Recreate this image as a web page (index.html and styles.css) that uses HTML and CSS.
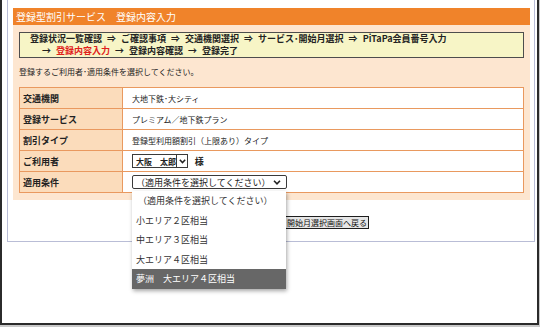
FILE: index.html
```html
<!DOCTYPE html>
<html>
  <head>
    <title>登録内容入力</title>
    <meta charset="UTF-8" />
    <meta name="viewport" content="width=device-width, initial-scale=1.0" />
    <link rel="stylesheet" href="styles.css">
  </head>
  <body>
    <div class="frame">
      <div class="panel">
        <h1 class="title">登録型割引サービス　登録内容入力</h1>

        <div class="body">
          <div class="steps">
            <div>登録状況一覧確認<span class="arr">⇒</span>ご確認事項<span class="arr">⇒</span>交通機関選択<span class="arr">⇒</span>サービス･開始月選択<span class="arr">⇒</span>PiTaPa会員番号入力</div>
            <div class="steps-2"><span class="arr first">→</span><span class="current">登録内容入力</span><span class="arr">→</span>登録内容確認<span class="arr">→</span>登録完了</div>
          </div>

          <p class="lead">登録するご利用者･適用条件を選択してください。</p>

          <table class="info">
            <tr>
              <th>交通機関</th>
              <td>大地下鉄･大シティ</td>
            </tr>
            <tr>
              <th>登録サービス</th>
              <td>プレミアム／地下鉄プラン</td>
            </tr>
            <tr>
              <th>割引タイプ</th>
              <td>登録型利用額割引（上限あり）タイプ</td>
            </tr>
            <tr>
              <th>ご利用者</th>
              <td>
                <span class="pick pick-name">
                  <span class="pick-text">大阪　太郎</span>
                  <span class="pick-btn">
                    <svg width="7" height="5" viewBox="0 0 7 5"><path d="M0.8 0.8 L3.5 3.6 L6.2 0.8" fill="none" stroke="#222" stroke-width="1.5"/></svg>
                  </span>
                </span>
                <span class="sama">様</span>
              </td>
            </tr>
            <tr>
              <th>適用条件</th>
              <td>
                <div class="combo">
                  <span class="pick pick-cond">
                    <span class="pick-text">（適用条件を選択してください）</span>
                    <svg width="8" height="5" viewBox="0 0 8 5"><path d="M1 0.8 L4 3.8 L7 0.8" fill="none" stroke="#222" stroke-width="1.6"/></svg>
                  </span>
                  <ul class="menu">
                    <li>（適用条件を選択してください）</li>
                    <li>小エリア２区相当</li>
                    <li>中エリア３区相当</li>
                    <li>大エリア４区相当</li>
                    <li class="active">夢洲　大エリア４区相当</li>
                  </ul>
                </div>
              </td>
            </tr>
          </table>
        </div>

        <div class="actions">
          <button type="button">サービス･開始月選択画面へ戻る</button>
        </div>
      </div>
    </div>
  </body>
</html>
```

FILE: styles.css
```css
body {
  margin: 0;
  background: #c9c9c9;
  font-family: "Noto Sans CJK JP", sans-serif;
}
.frame {
  box-sizing: border-box;
  width: 539px;
  height: 325px;
  background: #fff;
  border: 2px solid #2b2b2b;
  border-top: none;
}
.panel {
  box-sizing: border-box;
  width: 528px;
  margin-left: 5px;
  padding: 8px 4px 10px 5px;
  border: 1px solid #b9bdd6;
  border-top: none;
}
.title {
  margin: 0;
  height: 17px;
  padding-left: 3px;
  background: #f0832a;
  color: #fff;
  font-size: 10px;
  font-weight: normal;
  line-height: 17px;
}
.body {
  background: #fde6d0;
  padding: 7px 6px 7px;
}
.steps {
  border: 1px solid #4d4d4d;
  background: #f7f5c6;
  padding-left: 10px;
  font-size: 9px;
  font-weight: bold;
  line-height: 12px;
  color: #222;
}
.arr {
  margin: 0 5px;
}
.steps-2 .first {
  margin-left: 0;
}
.steps-2 {
  padding-left: 12px;
}
.current {
  color: #e0201b;
}
.lead {
  margin: 8px 0 9px;
  font-size: 8px;
  line-height: 12px;
  color: #222;
}
.info {
  width: 100%;
  border-collapse: collapse;
  border: 1px solid #e38a4c;
}
.info th,
.info td {
  height: 20px;
  padding: 0;
  border: 1px solid #e9995f;
  color: #222;
  text-align: left;
}
.info th {
  width: 99px;
  padding-left: 3px;
  background: #fbdcbb;
  font-size: 9px;
}
.info td {
  padding-left: 9px;
  background: #fff;
  font-size: 8px;
}
.info tr:nth-child(4) td {
  border-top-color: #f4dfcb;
}
.pick {
  display: inline-flex;
  align-items: center;
  box-sizing: border-box;
  height: 14px;
  border: 1px solid #3a3a3a;
  background: #fff;
  vertical-align: middle;
  white-space: nowrap;
}
.pick-name {
  width: 56px;
  font-weight: bold;
  font-size: 8px;
}
.pick-name .pick-text {
  flex: 1;
  padding-left: 3px;
}
.pick-btn {
  display: flex;
  align-items: center;
  justify-content: center;
  width: 10px;
  height: 100%;
  border-left: 1px solid #3a3a3a;
}
.sama {
  margin-left: 5px;
  font-size: 9px;
  font-weight: bold;
  vertical-align: middle;
}
.combo {
  position: relative;
  width: 155px;
}
.pick-cond {
  width: 155px;
  padding: 0 5px 0 3px;
  border-radius: 2px;
  font-size: 9px;
  justify-content: space-between;
}
.menu {
  position: absolute;
  top: 16px;
  left: 0;
  z-index: 2;
  width: 154px;
  margin: 0;
  padding: 0;
  list-style: none;
  background: #fff;
  box-shadow: 1px 2px 4px rgba(0, 0, 0, 0.35);
  font-size: 9px;
  color: #333;
}
.menu li {
  height: 19.5px;
  line-height: 19.5px;
  padding-left: 4px;
}
.menu li:first-child {
  padding-left: 6px;
}
.menu .active {
  background: #676767;
  color: #fff;
}
.actions {
  padding: 7px 0 0 236px;
}
.actions button {
  height: 13px;
  padding: 0 1px;
  border: 1px solid #1e1e1e;
  border-radius: 0;
  background: #e6e6e6;
  font-family: "Noto Sans CJK JP", sans-serif;
  font-size: 8px;
  line-height: 11px;
  color: #111;
}
```
